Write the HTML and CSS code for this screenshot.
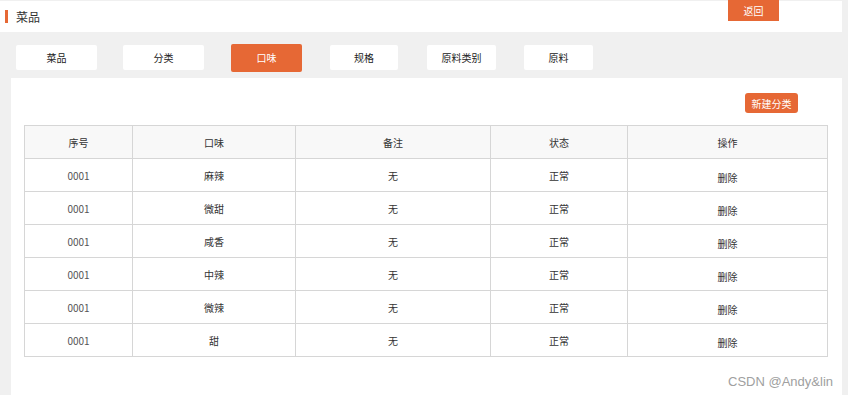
FILE: index.html
```html
<!DOCTYPE html>
<html>
<head>
    <title>口味</title>
    <link rel="stylesheet" href="styles.css">
</head>
<body>
    <div class="header">
        <span class="title-mark"></span>
        <span class="title">菜品</span>
        <button class="back-button">返回</button>
    </div>

    <div class="tabs">
        <div class="tab tab-wide">菜品</div>
        <div class="tab tab-wide">分类</div>
        <div class="tab tab-active">口味</div>
        <div class="tab">规格</div>
        <div class="tab">原料类别</div>
        <div class="tab">原料</div>
    </div>

    <div class="panel">
        <div class="toolbar">
            <button class="add-button">新建分类</button>
        </div>
        <table class="flavor-table">
            <colgroup>
                <col style="width: 108px">
                <col style="width: 163px">
                <col style="width: 195px">
                <col style="width: 137px">
                <col>
            </colgroup>
            <thead>
                <tr>
                    <th>序号</th>
                    <th>口味</th>
                    <th>备注</th>
                    <th>状态</th>
                    <th>操作</th>
                </tr>
            </thead>
            <tbody>
                <tr><td class="num">0001</td><td>麻辣</td><td>无</td><td>正常</td><td class="op">删除</td></tr>
                <tr><td class="num">0001</td><td>微甜</td><td>无</td><td>正常</td><td class="op">删除</td></tr>
                <tr><td class="num">0001</td><td>咸香</td><td>无</td><td>正常</td><td class="op">删除</td></tr>
                <tr><td class="num">0001</td><td>中辣</td><td>无</td><td>正常</td><td class="op">删除</td></tr>
                <tr><td class="num">0001</td><td>微辣</td><td>无</td><td>正常</td><td class="op">删除</td></tr>
                <tr><td class="num">0001</td><td>甜</td><td>无</td><td>正常</td><td class="op">删除</td></tr>
            </tbody>
        </table>
        <div class="watermark">CSDN @Andy&amp;lin</div>
    </div>
</body>
</html>
```

FILE: styles.css
```css
body {
    margin: 0;
    padding-top: 1px;
    background-color: #f0f0f0;
    font-family: "Noto Sans CJK SC", "Noto Sans", sans-serif;
    color: #333;
    overflow: hidden;
}
button {
    font-family: inherit;
    border: none;
    color: white;
    background-color: #e66835;
    cursor: pointer;
}
.header {
    position: relative;
    display: flex;
    align-items: center;
    height: 31px;
    width: 842px;
    background-color: white;
}
.title-mark {
    width: 3px;
    height: 13px;
    margin-left: 5px;
    background-color: #e66835;
}
.title {
    margin-left: 8px;
    font-size: 12px;
    color: #333;
}
.back-button {
    position: absolute;
    left: 728px;
    top: -1px;
    width: 51px;
    height: 21px;
    padding: 0;
    font-size: 10px;
}
.tabs {
    display: flex;
    align-items: center;
    height: 29px;
    margin-top: 11px;
    padding-left: 16px;
}
.tab {
    width: 69px;
    height: 25px;
    margin-right: 28px;
    display: flex;
    align-items: center;
    justify-content: center;
    background-color: white;
    border-radius: 2px;
    font-size: 10px;
    color: #222;
}
.tab-wide {
    width: 81px;
    margin-right: 26px;
}
.tab-wide + .tab-wide {
    margin-right: 27px;
}
.tab-active {
    width: 71px;
    height: 28px;
    margin-right: 28px;
    background-color: #e66835;
    color: white;
}
.tab:nth-child(4) {
    width: 68px;
    margin-right: 29px;
}
.panel {
    position: relative;
    margin-top: 6px;
    margin-left: 11px;
    width: 831px;
    height: 320px;
    background-color: white;
}
.toolbar {
    display: flex;
    justify-content: flex-end;
    padding: 15px 44px 12px 0;
}
.add-button {
    width: 53px;
    height: 20px;
    padding: 0;
    border-radius: 3px;
    font-size: 10px;
}
.flavor-table {
    margin-left: 13px;
    width: 804px;
    border-collapse: collapse;
    table-layout: fixed;
    font-size: 10px;
}
.flavor-table th,
.flavor-table td {
    border: 1px solid #d6d6d6;
    height: 32px;
    padding: 0;
    text-align: center;
    font-weight: normal;
    color: #333;
}
.flavor-table th {
    background-color: #f8f8f8;
}
.flavor-table .num {
    color: #555;
}
.flavor-table .op {
    padding-top: 4px;
    height: 28px;
}
.watermark {
    position: absolute;
    right: 9px;
    bottom: 9px;
    font-family: "Liberation Sans", Arial, sans-serif;
    font-size: 13px;
    color: #a0a0a0;
}
```
